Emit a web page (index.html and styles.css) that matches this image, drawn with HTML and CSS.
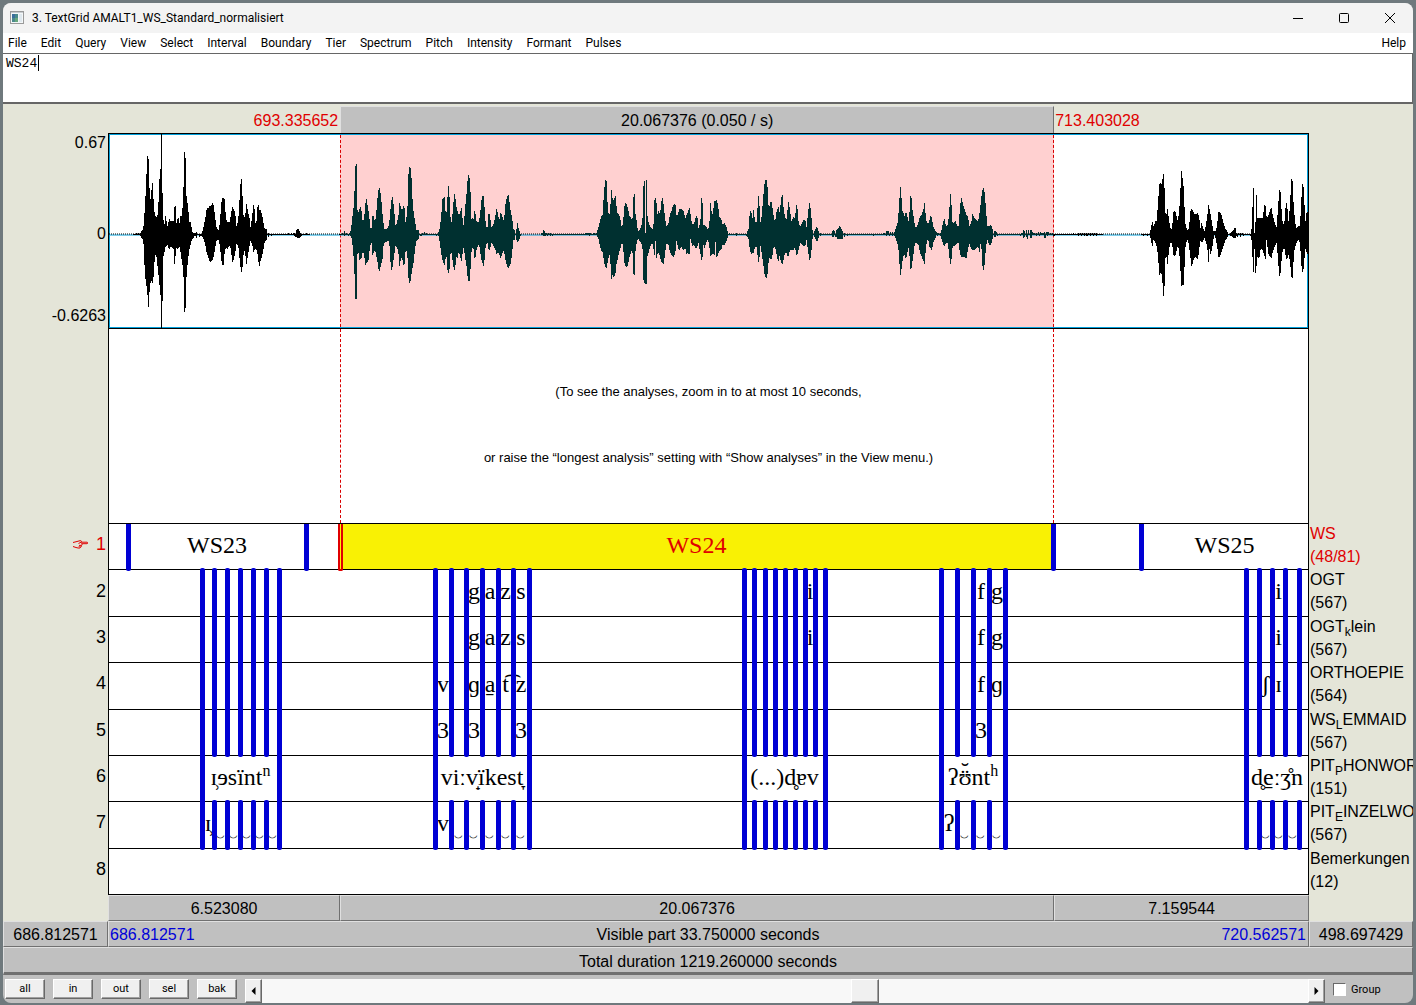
FILE: index.html
```html
<!DOCTYPE html>
<html lang="en">
<head>
    <meta charset="UTF-8">
    <meta name="viewport" content="width=device-width, initial-scale=1.0">
    <title>3. TextGrid AMALT1_WS_Standard_normalisiert</title>
    <link rel="stylesheet" href="styles.css">
</head>
<body>
    <div class="window">
        <header class="titlebar">
            <svg class="app-icon" width="16" height="16" viewBox="0 0 16 16">
                <rect x="1.5" y="1.5" width="13" height="12" fill="#f4f7f8" stroke="#9a9a9a"/>
                <rect x="2" y="2" width="12" height="1" fill="#c8ccd0"/>
                <rect x="3" y="4" width="6" height="8" fill="#4a8a8c"/>
                <rect x="3" y="4" width="3" height="4" fill="#3b6f9c"/>
                <rect x="6" y="8" width="3" height="4" fill="#67a67c"/>
                <rect x="10" y="4" width="3" height="8" fill="#dfe8ee"/>
            </svg>
            <h1>3. TextGrid AMALT1_WS_Standard_normalisiert</h1>
            <div class="window-buttons">
                <button aria-label="Minimize"><svg width="12" height="12" viewBox="0 0 12 12"><path d="M1 6.5h10"/></svg></button>
                <button aria-label="Maximize"><svg width="12" height="12" viewBox="0 0 12 12"><rect x="1.5" y="1.5" width="9" height="9" rx="1"/></svg></button>
                <button aria-label="Close"><svg width="12" height="12" viewBox="0 0 12 12"><path d="M1 1l10 10M11 1L1 11"/></svg></button>
            </div>
        </header>

        <nav class="menubar">
            <a href="#">File</a>
            <a href="#">Edit</a>
            <a href="#">Query</a>
            <a href="#">View</a>
            <a href="#">Select</a>
            <a href="#">Interval</a>
            <a href="#">Boundary</a>
            <a href="#">Tier</a>
            <a href="#">Spectrum</a>
            <a href="#">Pitch</a>
            <a href="#">Intensity</a>
            <a href="#">Formant</a>
            <a href="#">Pulses</a>
            <a href="#" class="help">Help</a>
        </nav>

        <div class="text-field">
            <textarea id="label-text" aria-label="Interval text" spellcheck="false">WS24</textarea>
            <span class="caret"></span>
        </div>

        <main class="canvas">
            <div class="row top-row">
                <div></div>
                <div class="parts">
                    <span class="time-start">693.335652</span>
                    <button class="bar">20.067376 (0.050 / s)</button>
                    <span class="time-end">713.403028</span>
                </div>
            </div>

            <div class="row sound">
                <div class="scale">
                    <span>0.67</span>
                    <span class="zero">0</span>
                    <span>-0.6263</span>
                </div>
                <div class="plot parts wave">
                    <div class="selection"></div>
                    <svg viewBox="0 0 3597 193" preserveAspectRatio="none" aria-label="Waveform">
                        <defs>
                            <clipPath id="selected"><rect x="695" y="0" width="2138" height="193"/></clipPath>
                        </defs>
                        <path class="zero-line" d="M0 100.5H3597"/>
                        <path class="noise" d="M0 99.5H3597"/>
                        <path id="envelope" class="envelope"/>
                        <use href="#envelope" class="inside" clip-path="url(#selected)"/>
                    </svg>
                </div>
            </div>

            <div class="row analysis">
                <div></div>
                <div class="plot parts">
                    <div class="selection"></div>
                    <div class="message">
                        <p>(To see the analyses, zoom in to at most 10 seconds,</p>
                        <p>or raise the “longest analysis” setting with “Show analyses” in the View menu.)</p>
                    </div>
                </div>
            </div>

            <div id="tiers" class="tiers">
                <!-- Tiers populated by JS -->
            </div>

            <div class="row">
                <div></div>
                <div class="parts">
                    <button class="bar">6.523080</button>
                    <button class="bar">20.067376</button>
                    <button class="bar">7.159544</button>
                </div>
            </div>
            <div class="row">
                <button class="bar">686.812571</button>
                <button class="bar visible-part">
                    <span class="edge">686.812571</span>
                    <span>Visible part 33.750000 seconds</span>
                    <span class="edge">720.562571</span>
                </button>
                <button class="bar">498.697429</button>
            </div>
            <button class="bar total">Total duration 1219.260000 seconds</button>
        </main>

        <footer class="toolbar">
            <button class="tool">all</button>
            <button class="tool">in</button>
            <button class="tool">out</button>
            <button class="tool">sel</button>
            <button class="tool">bak</button>
            <div class="scrollbar">
                <button aria-label="Scroll left"><svg width="5" height="8" viewBox="0 0 5 8"><path d="M4.500 0v8L0.500 4z"/></svg></button>
                <input type="range" min="0" max="1000" value="579" aria-label="Scroll position">
                <button aria-label="Scroll right"><svg width="5" height="8" viewBox="0 0 5 8"><path d="M0.500 0v8L4.500 4z"/></svg></button>
            </div>
            <label class="group"><input type="checkbox"> Group</label>
        </footer>
    </div>

    <script src="script.js"></script>
</body>
</html>
```

FILE: styles.css
```css
* {
    box-sizing: border-box;
}
body {
    margin: 0;
    padding: 3px 3px 2px;
    height: 100vh;
    min-height: 700px;
    background-color: #6f797d;
    font-family: "Liberation Sans", Arial, sans-serif;
    font-size: 16px;
    color: #000;
}
button {
    font: inherit;
    color: inherit;
    padding: 0;
    margin: 0;
    border: none;
    background: none;
}
.window {
    display: flex;
    flex-direction: column;
    height: 100%;
    border-radius: 8px;
    overflow: hidden;
    background-color: #c0c0c0;
}

/* Title bar and menus */
.titlebar {
    display: flex;
    align-items: center;
    height: 30px;
    flex: none;
    padding-left: 6px;
    background-color: #f3f3f3;
    font-family: Roboto, "Open Sans", sans-serif;
}
.titlebar h1 {
    margin: 0 0 0 7px;
    font-size: 12px;
    font-weight: normal;
}
.window-buttons {
    display: flex;
    margin-left: auto;
}
.window-buttons button {
    width: 46px;
    height: 30px;
}
.window-buttons svg {
    display: block;
    margin: auto;
    fill: none;
    stroke: #000;
}
.menubar {
    display: flex;
    align-items: center;
    gap: 14px;
    height: 20px;
    flex: none;
    padding: 0 7px 0 5px;
    background-color: #fff;
    font-family: Roboto, "Open Sans", sans-serif;
    font-size: 12px;
}
.menubar a {
    color: #000;
    text-decoration: none;
}
.menubar .help {
    margin-left: auto;
}
.text-field {
    position: relative;
    flex: none;
    height: 51px;
    border: 1px solid #666;
    border-width: 1px 1px 2px 0;
    background-color: #fff;
    font-family: "Liberation Mono", "Courier New", monospace;
    font-size: 13px;
}
.text-field textarea {
    display: block;
    width: 100%;
    height: 100%;
    padding: 2px 3px;
    border: none;
    outline: none;
    resize: none;
    font: inherit;
    line-height: 15px;
}
.caret {
    position: absolute;
    top: 1px;
    left: calc(4px + 4ch);
    width: 1px;
    height: 16px;
    background-color: #000;
}

/* Drawing area */
.canvas {
    display: flex;
    flex-direction: column;
    flex: 1;
    min-height: 0;
    background-color: #e4e5d8;
}
.row {
    display: grid;
    grid-template-columns: 105px 1fr 104px;
    height: 26px;
    flex: none;
}
.parts {
    display: grid;
    grid-template-columns: 6.52308fr 20.067376fr 7.159544fr;
}
.top-row {
    height: 29px;
    padding-top: 2px;
    color: #e00000;
    line-height: 29px;
}
.top-row .bar {
    color: #000;
    line-height: 24px;
}
.time-start {
    text-align: right;
    padding-right: 2px;
}
.time-end {
    padding-left: 1px;
}
.bar {
    display: block;
    min-width: 0;
    padding-top: 1px;
    background-color: #c0c0c0;
    border: 1px solid;
    border-color: #e0e0e0 #707070 #707070 #e0e0e0;
    text-align: center;
}
.plot {
    border: 1px solid #000;
    border-width: 0 1px;
    background-color: #fff;
}
.sound {
    flex: 196 0 0px;
    height: auto;
}
.analysis {
    flex: 194 0 0px;
    height: auto;
}
.scale {
    display: flex;
    flex-direction: column;
    justify-content: space-between;
    padding: 1px 2px 4px 0;
    text-align: right;
}
.zero {
    padding-top: 8px;
}
.wave {
    border-width: 1px;
    box-shadow: inset 0 0 0 1px #00a0dc;
}
.selection {
    grid-area: 1 / 2;
    margin-left: -1px;
    border: 0 dashed #d80000;
    border-width: 0 1px;
}
.wave .selection {
    background-color: #ffd0d0;
    margin-top: 1px;
    margin-bottom: 1px;
}
.wave svg {
    grid-area: 1 / 1 / 2 / 4;
    width: 100%;
    height: 100%;
    min-height: 0;
}
.zero-line,
.noise {
    stroke: #00a0dc;
    shape-rendering: crispEdges;
}
.noise {
    stroke: #000;
    stroke-dasharray: 3 3;
}
.envelope {
    shape-rendering: crispEdges;
}
.inside {
    fill: #003030;
}
.message {
    grid-area: 1 / 1 / 2 / 4;
    display: flex;
    flex-direction: column;
    justify-content: center;
    gap: 50px;
    padding-bottom: 3px;
    text-align: center;
    font-size: 13px;
    line-height: 16px;
}
.message p {
    margin: 0;
}

/* Tiers */
.tiers {
    display: flex;
    flex-direction: column;
    flex: 372 0 0px;
}
.tier {
    flex: 1;
    height: auto;
    min-height: 0;
}
.tier-number {
    display: flex;
    align-items: center;
    justify-content: flex-end;
    gap: 8px;
    padding: 0 2px 3px 0;
    font-size: 18px;
}
.hand {
    fill: none;
    stroke: #e00000;
}
.tier-track {
    position: relative;
    border-top: 1px solid #000;
    font-family: "Liberation Serif", "Times New Roman", serif;
    font-size: 24px;
}
.tier:last-child {
    flex-basis: 1px;
}
.tier:last-child .tier-track {
    border-bottom: 1px solid #000;
}
.tier-name {
    margin-top: -1px;
    padding-left: 1px;
    line-height: 23px;
    white-space: nowrap;
}
.tier-name sub {
    font-size: 12px;
    line-height: 1px;
    vertical-align: -4px;
}
.active .tier-number,
.active .tier-name {
    color: #e00000;
}
.interval {
    position: absolute;
    top: 0;
    bottom: 0;
    display: flex;
    align-items: center;
    justify-content: center;
    padding-bottom: 3px;
    white-space: pre;
}
.interval.selected {
    background-color: #f9f104;
    color: #e00000;
}
.interval sup {
    font-size: 16px;
    line-height: 1px;
    vertical-align: 9px;
}
.arc {
    font-size: 14px;
    line-height: 1px;
    vertical-align: -4px;
}
.stacked {
    position: relative;
}
.stacked span {
    position: absolute;
    left: 50%;
    transform: translateX(-50%);
}
.stacked .breve {
    top: -6px;
}
.boundary {
    position: absolute;
    z-index: 1;
    top: -2px;
    bottom: -2px;
    width: 5px;
    margin-left: -2px;
    border-radius: 2px;
    background-color: #0000d4;
}
.active .boundary {
    top: 0;
    border-radius: 0 0 2px 2px;
}
.boundary.selected {
    background-color: #f9f104;
    border: 2px solid #e00000;
    border-top: none;
}

/* Bars below the tiers */
.visible-part {
    display: flex;
    justify-content: space-between;
    align-items: center;
    padding: 1px 2px 0 1px;
}
.edge {
    color: #0000d8;
}
.total {
    flex: none;
    height: 28px;
    padding-top: 3px;
    border-bottom: 3px solid #707070;
}

/* Toolbar */
.toolbar {
    display: flex;
    align-items: flex-start;
    gap: 8px;
    height: 28px;
    flex: none;
    padding: 4px 0 0 2px;
    font-family: Roboto, "Open Sans", sans-serif;
    font-size: 11px;
}
.tool,
.scrollbar button {
    border: 1px solid;
    border-color: #fff #696969 #696969 #fff;
    box-shadow: inset -1px -1px #a0a0a0;
    background-color: #f0f0f0;
}
.tool {
    width: 40px;
    height: 20px;
    line-height: 18px;
}
.scrollbar {
    display: flex;
    flex: 1;
    height: 24px;
}
.scrollbar button {
    width: 17px;
}
.scrollbar svg {
    display: block;
    margin: auto;
}
.scrollbar input {
    flex: 1;
    min-width: 0;
    margin: 0;
    appearance: none;
    background-color: #f8f8f8;
}
.scrollbar input::-webkit-slider-thumb {
    appearance: none;
    width: 28px;
    height: 24px;
    border: 1px solid;
    border-color: #fff #696969 #696969 #fff;
    box-shadow: inset -1px -1px #a0a0a0;
    background-color: #f0f0f0;
}
.group {
    display: flex;
    align-items: center;
    gap: 5px;
    width: 80px;
    height: 20px;
}
.group input {
    appearance: none;
    width: 13px;
    height: 13px;
    margin: 0;
    border: 1px solid;
    border-color: #696969 #fff #fff #696969;
    background-color: #fff;
}
```

FILE: script.js
```javascript
// width of the visible part, in drawing units
const VISIBLE = 1199;

const groups = [
    [93, 105, 118, 131, 144, 157, 170],
    [326, 342, 357, 373, 389, 404, 420],
    [635, 645, 656, 666, 676, 686, 696, 706, 716],
    [832, 848, 864, 880, 896],
    [1137, 1150, 1163, 1176, 1190]
];
const segments = groups.flat();
const words = [93, 170, 326, 420, 635, 716, 832, 896, 1137];
const arc = '<span class="arc">‿</span>';
const hand = `<svg class="hand" width="15" height="9" viewBox="0 0 15 9">
    <path d="M0 2.500L4 1.500L7 0.700C8.500 0.500 9 1.500 8 2.200H14C15 2.200 15 3.700 14 3.700H8.500M8.500 3.700C9.500 4.200 9.300 5.200 8.300 5.400C9 6 8.600 6.900 7.600 6.900C7.600 8 6.800 8.200 5.500 8.100L3 7.500L0 6.500M8.300 5.400H6M7.600 6.900H5.500M8 2.200L5.500 3.500"/>
</svg>`;

const tiers = [
    {
        name: "WS",
        count: "48/81",
        boundaries: [19, 197, 944, 1032],
        intervals: [[19, 197, "WS23"], [231, 944, "WS24", true], [1032, 1199, "WS25"]]
    },
    {
        name: "OGT",
        count: "567",
        boundaries: segments,
        intervals: [[357, 373, "g"], [373, 389, "a"], [389, 404, "z"], [404, 420, "s"], [696, 706, "i"],
            [864, 880, "f"], [880, 896, "g"], [1163, 1176, "i"]]
    },
    {
        name: "OGT<sub>k</sub>lein",
        count: "567",
        boundaries: segments,
        intervals: [[357, 373, "g"], [373, 389, "a"], [389, 404, "z"], [404, 420, "s"], [696, 706, "i"],
            [864, 880, "f"], [880, 896, "g"], [1163, 1176, "i"]]
    },
    {
        name: "ORTHOEPIE",
        count: "564",
        boundaries: segments,
        intervals: [[326, 342, "v"], [357, 373, "ɡ"], [373, 389, "a̠"], [389, 404, "t͡"], [404, 420, "z"],
            [864, 880, "f"], [880, 896, "ɡ"], [1150, 1163, "ʃ"], [1163, 1176, "ɪ"]]
    },
    {
        name: "WS<sub>L</sub>EMMAID",
        count: "567",
        boundaries: segments,
        intervals: [[326, 342, "3"], [357, 373, "3"], [404, 420, "3"], [864, 880, "3"]]
    },
    {
        name: "PIT<sub>P</sub>HONWOR",
        count: "151",
        boundaries: words,
        intervals: [[93, 170, "ɪ̹ɘsïnt<sup>n</sup>"], [326, 420, "viːv̟ïkest̞"], [635, 716, "(...)d̥ɐv"],
            [832, 896, 'ʔ<span class="stacked">ʊ<span>¨</span><span class="breve">˘</span></span>nt<sup>h</sup>'],
            [1137, 1199, "d̥e̠ːʒ̊n"]]
    },
    {
        name: "PIT<sub>E</sub>INZELWO",
        count: "567",
        boundaries: segments,
        intervals: [[93, 105, "ɪ̹"], [105, 118, arc], [118, 131, arc], [131, 144, arc], [144, 157, arc], [157, 170, arc],
            [326, 342, "v"], [342, 357, arc], [357, 373, arc], [373, 389, arc], [389, 404, arc], [404, 420, arc],
            [832, 848, "ʔ"], [848, 864, arc], [864, 880, arc], [880, 896, arc],
            [1150, 1163, arc], [1163, 1176, arc], [1176, 1190, arc]]
    },
    { name: "Bemerkungen", count: "12", boundaries: [], intervals: [] }
];

// amplitude envelope, three steps per unit: "position,above,below"
const sound = [
    { start: -207, points: "207,0,0 280,0,0 290,2,1 300,1,1 310,6,6 315,27,40 322,78,57 325,80,75 330,33,50 334,38,45 336,60,50 340,38,45 344,20,25 348,17,18 354,20,35 358,53,48 361,65,60 363,66,61 363,100,93 366,100,93 366,42,66 369,40,66 370,15,22 374,10,17 377,20,12 382,8,10 388,16,15 393,13,12 401,13,15 404,30,32 407,28,20 410,8,12 414,20,15 418,10,12 422,20,18 426,18,28 430,40,35 433,83,78 437,75,73 439,40,44 442,33,32 445,25,23 448,12,15 452,12,10 456,5,5 462,3,3 470,3,3 476,1,1 480,2,3 486,1,2 492,10,5 497,18,12 500,26,18 504,26,22 508,28,26 512,28,28 516,30,26 519,33,25 522,26,20 526,16,12 530,6,6 536,4,5 540,13,12 544,32,25 547,36,30 550,37,32 554,35,18 558,15,12 562,13,15 568,12,11 573,20,15 577,28,28 582,25,24 586,20,18 590,7,8 595,16,12 599,37,25 603,58,36 606,52,38 609,25,28 612,15,14 616,20,20 620,32,30 624,22,20 628,18,12 632,6,6 637,20,10 640,30,18 643,28,16 648,5,14 652,27,18 655,30,26 658,25,32 662,24,26 666,20,22 670,12,15 674,6,8 680,5,5 686,2,3 692,1,1 710,1,1 730,0,0 750,2,1 764,2,2 770,5,3 775,6,4 780,3,3 786,1,1 800,2,1 810,0,0 898,0,0" },
    { start: 693, points: "5,1,1 14,4,1 24,1,1 32,4,2 36,12,5 39,25,15 42,28,28 44,47,42 47,72,68 50,70,64 52,25,20 56,22,18 58,25,26 61,28,25 64,25,24 68,13,18 72,15,18 76,30,31 79,36,28 82,30,28 86,22,25 89,14,15 92,5,10 95,7,8 98,20,22 101,18,18 105,12,15 109,22,22 113,38,28 117,47,38 120,45,35 123,38,30 127,22,27 130,12,12 134,5,8 140,5,7 145,7,6 149,15,12 152,27,30 156,38,38 159,36,28 163,22,20 167,8,10 172,13,14 176,20,20 179,33,34 182,28,25 186,24,22 190,28,30 193,30,32 196,12,18 199,15,15 203,30,25 206,65,47 209,68,49 212,66,46 214,60,40 217,38,34 221,22,28 225,14,14 229,5,7 236,4,4 242,1,2 254,3,1 264,1,1 290,1,1 296,3,2 300,7,9 304,20,20 307,35,25 310,36,28 313,40,32 316,24,25 320,22,22 322,35,35 325,50,39 328,42,37 331,18,20 335,12,18 339,25,30 342,40,35 345,40,36 349,28,22 352,24,24 356,20,18 360,20,20 364,28,28 367,18,20 371,8,12 375,25,22 379,38,30 382,52,40 385,60,46 388,58,48 391,48,38 394,15,18 397,17,14 400,14,12 403,24,23 406,22,24 410,12,14 415,12,10 420,18,14 423,30,24 426,38,26 430,40,32 433,30,28 436,14,14 440,7,9 443,8,8 446,22,15 450,20,15 454,7,8 460,10,11 466,18,15 470,26,20 474,20,18 478,14,20 482,22,24 486,20,20 490,14,16 494,20,20 497,32,26 501,37,32 505,40,34 508,34,32 511,25,30 514,20,25 517,15,16 520,6,6 524,4,5 528,1,3 532,12,8 536,6,6 540,2,3 546,0,0 600,0,0 610,5,1 616,2,2 636,2,2 660,1,0 680,1,1 720,1,1 750,3,1 760,1,1 770,2,1 776,8,5 780,14,12 784,18,16 788,20,18 792,42,26 795,52,32 799,58,34 802,34,30 806,20,22 810,20,20 814,46,45 817,37,40 820,34,42 823,36,42 826,40,40 829,30,30 833,20,25 837,20,18 841,15,14 845,8,9 849,10,10 853,28,28 857,32,32 861,30,33 865,24,28 869,18,22 873,17,18 877,12,14 881,40,42 884,40,40 886,22,18 890,14,8 894,3,4 900,5,7 904,8,8 908,18,15 911,53,50 914,53,48 915,2,48 917,2,49 918,54,49 920,54,49 922,20,22 926,12,18 930,8,12 936,6,8 940,5,12 943,34,24 946,37,2 949,34,24 952,20,20 956,24,18 960,20,22 964,32,27 967,37,28 970,32,31 974,20,22 979,8,9 985,10,10 990,20,18 994,23,20 998,28,22 1002,30,22 1006,31,18 1010,18,5 1014,20,14 1018,25,16 1024,26,12 1030,24,16 1036,16,14 1040,20,20 1044,22,18 1048,27,22 1052,20,2 1056,10,12 1062,10,10 1068,18,14 1072,18,12 1076,5,8 1079,10,16" },
    { start: 1773, points: "2,16,20 5,40,26 8,30,22 10,9,10 14,10,14 18,8,8 24,5,5 28,10,12 32,34,22 36,18,20 40,25,18 43,34,24 46,33,5 50,34,25 54,30,20 58,18,16 64,15,15 68,10,10 74,12,10 80,7,6 84,2,2 90,2,1 110,1,1 140,1,1 146,6,5 149,20,14 153,25,20 157,15,18 161,26,19 165,12,12 170,12,12 175,40,28 178,32,26 181,12,10 185,18,18 190,38,30 194,52,40 198,55,44 202,52,42 205,30,30 209,28,22 213,35,26 217,28,22 221,18,12 225,12,12 229,22,18 235,28,28 239,22,20 243,34,28 247,42,30 251,25,25 255,18,18 259,14,18 263,26,22 266,33,21 270,24,15 275,12,15 280,18,16 285,16,12 289,30,20 292,28,20 296,12,15 301,8,8 306,12,10 311,15,12 316,14,11 320,7,5 324,22,16 329,32,26 333,24,22 337,5,5 343,3,2 351,8,8 356,3,3 364,1,1 395,1,1 400,5,3 410,4,4 420,9,5 428,3,4 440,1,1 520,1,1 550,1,1 562,4,1 584,2,2 588,7,5 592,10,8 597,26,18 600,45,40 603,49,40 606,24,30 610,22,22 614,18,20 618,23,26 622,18,18 627,12,12 631,38,34 634,39,34 637,25,28 641,18,18 645,8,8 650,7,8 655,12,10 660,18,18 665,20,22 670,24,26 674,32,30 678,15,12 684,10,3 688,14,12 692,19,14 696,16,16 700,8,8 706,4,4 712,2,2 722,1,1 728,10,8 733,17,12 738,8,8 744,10,9 748,25,22 752,42,30 755,28,24 758,10,12 766,14,11 771,9,9 776,8,8 780,28,20 784,37,22 789,30,22 793,26,22 799,20,24 804,18,15 808,8,9 814,12,14 818,21,16 824,16,15 829,15,14 834,13,12 839,22,18 843,34,5 847,44,30 850,47,36 854,42,30 858,25,12 862,8,5 868,8,10 873,10,10 878,5,4 886,4,3 894,1,1 960,1,1 970,4,3 980,5,4 994,5,4 1000,1,1 1026,4,2 1034,2,4 1042,3,1 1060,1,1" },
    { start: 2823, points: "15,1,1 70,1,1 110,2,2 150,1,1 160,0,0 270,0,0 280,1,1 295,1,1 302,5,4 307,13,12 311,8,5 316,13,8 320,14,12 324,30,20 328,50,41 332,51,38 336,50,40 340,62,62 343,52,58 346,22,24 350,20,22 353,26,30 357,14,15 362,6,8 366,5,8 370,22,20 374,23,22 378,22,20 382,14,12 387,20,14 391,42,32 394,65,52 398,55,50 402,45,50 405,12,15 409,7,8 414,3,5 418,10,14 422,25,24 425,26,32 430,23,26 435,20,22 440,20,24 444,22,24 448,16,14 451,6,6 455,12,8 460,6,6 464,3,3 468,10,8 472,18,12 475,30,30 478,26,14 482,20,20 486,12,15 490,4,5 496,3,3 501,8,10 505,22,22 509,22,22 514,20,18 520,12,12 526,6,6 534,2,2 540,1,1 556,7,4 560,1,1 570,3,5 578,1,1 602,1,1 606,8,8 609,45,36 612,48,38 613,2,5 615,2,38 617,15,38 619,45,34 622,16,22 628,16,24 632,17,14 638,16,16 644,30,22 647,28,25 650,17,2 654,18,18 660,24,22 664,28,24 668,20,18 674,12,12 680,7,8 684,26,24 688,45,42 692,42,38 696,16,20 700,10,14 704,14,14 708,33,24 712,28,24 716,12,20 720,30,26 724,55,42 727,58,46 730,35,30 734,18,14 738,6,10 744,8,5 750,8,8 754,35,30 759,56,40 762,40,30 766,12,14 770,22,18 773,22,20" }
];

function percent(x) {
    return (x / VISIBLE * 100).toFixed(3) + "%";
}

function drawSound() {
    const upper = [];
    const lower = [];
    let last = [0, 0, 0];
    function add(x, above, below) {
        upper.push(`${x} ${100 - above}`);
        lower.unshift(`${x} ${100 + below}`);
    }
    sound.forEach(part => {
        part.points.split(" ").forEach(point => {
            const [position, above, below] = point.split(",").map(Number);
            const x = part.start + position;
            // quiet stretches flicker from one column to the next
            if (Math.max(last[1], last[2], above, below) <= 5) {
                for (let i = last[0] + 3; i < x; i += 3) {
                    const t = (i - last[0]) / (x - last[0]);
                    const up = last[1] + (above - last[1]) * t;
                    const down = last[2] + (below - last[2]) * t;
                    const step = i / 3 | 0;
                    add(i, step % 2 ? up : 0, step % 3 ? 0 : down);
                }
            }
            add(x, above, below);
            last = [x, above, below];
        });
    });
    document.getElementById("envelope").setAttribute("d", "M" + upper.concat(lower).join("L") + "Z");
}

function drawTiers() {
    document.getElementById("tiers").innerHTML = tiers.map((tier, i) => {
        const active = i === 0;
        const intervals = tier.intervals.map(([from, to, text, selected]) =>
            `<div class="interval${selected ? " selected" : ""}" style="left: ${percent(from)}; width: ${percent(to - from)}"><span>${text}</span></div>`
        ).join("");
        const boundaries = tier.boundaries.map(x =>
            `<span class="boundary" style="left: ${percent(x)}"></span>`
        ).join("");
        const cursor = active ? `<span class="boundary selected" style="left: ${percent(231)}"></span>` : "";
        return `
            <div class="row tier${active ? " active" : ""}">
                <div class="tier-number">${active ? hand : ""}<span>${i + 1}</span></div>
                <div class="plot tier-track">${intervals}${boundaries}${cursor}</div>
                <div class="tier-name">${tier.name}<br>(${tier.count})</div>
            </div>
        `;
    }).join("");
}

drawSound();
drawTiers();
```
